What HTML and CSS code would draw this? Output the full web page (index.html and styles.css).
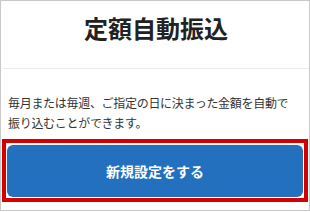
FILE: index.html
```html
<html lang="ja">
<head>
    <meta charset="UTF-8">
    <meta name="viewport" content="width=device-width, initial-scale=1.0">
    <title>定額自動振込</title>
    <link rel="stylesheet" href="styles.css">
</head>
<body>
    <div class="frame">
        <div class="header">
            <h1>定額自動振込</h1>
        </div>
        <p class="lead">毎月または毎週、ご指定の日に決まった金額を自動で振り込むことができます。</p>
        <div class="highlight">
            <button class="new-btn">新規設定をする</button>
        </div>
    </div>
</body>
</html>
```

FILE: styles.css
```css
body {
    margin: 0;
    background-color: #fff;
    font-family: "Noto Sans CJK JP", "Noto Sans", sans-serif;
}

.frame {
    width: 310px;
    height: 211px;
    box-sizing: border-box;
    border: 1px solid #c8c8c8;
}

.header {
    height: 67px;
    margin-left: 2px;
    border-bottom: 1px solid #e9ecef;
}

h1 {
    margin: 0;
    padding-top: 11px;
    text-align: center;
    font-size: 24px;
    line-height: 32px;
    font-weight: bold;
    color: #222;
}

.lead {
    margin: 0;
    padding: 24px 14px 0 7px;
    font-size: 12px;
    letter-spacing: -0.3px;
    line-height: 20px;
    color: #333;
}

.highlight {
    margin: 6px 1px 0 1px;
    border: 4px solid #d40000;
    padding: 2px 1px 1px 1px;
}

.new-btn {
    display: block;
    width: 100%;
    height: 52px;
    border: none;
    border-radius: 6px;
    background-color: #2270be;
    color: white;
    font-family: "Noto Sans CJK JP", "Noto Sans", sans-serif;
    font-size: 14px;
    font-weight: bold;
    cursor: pointer;
}
```
